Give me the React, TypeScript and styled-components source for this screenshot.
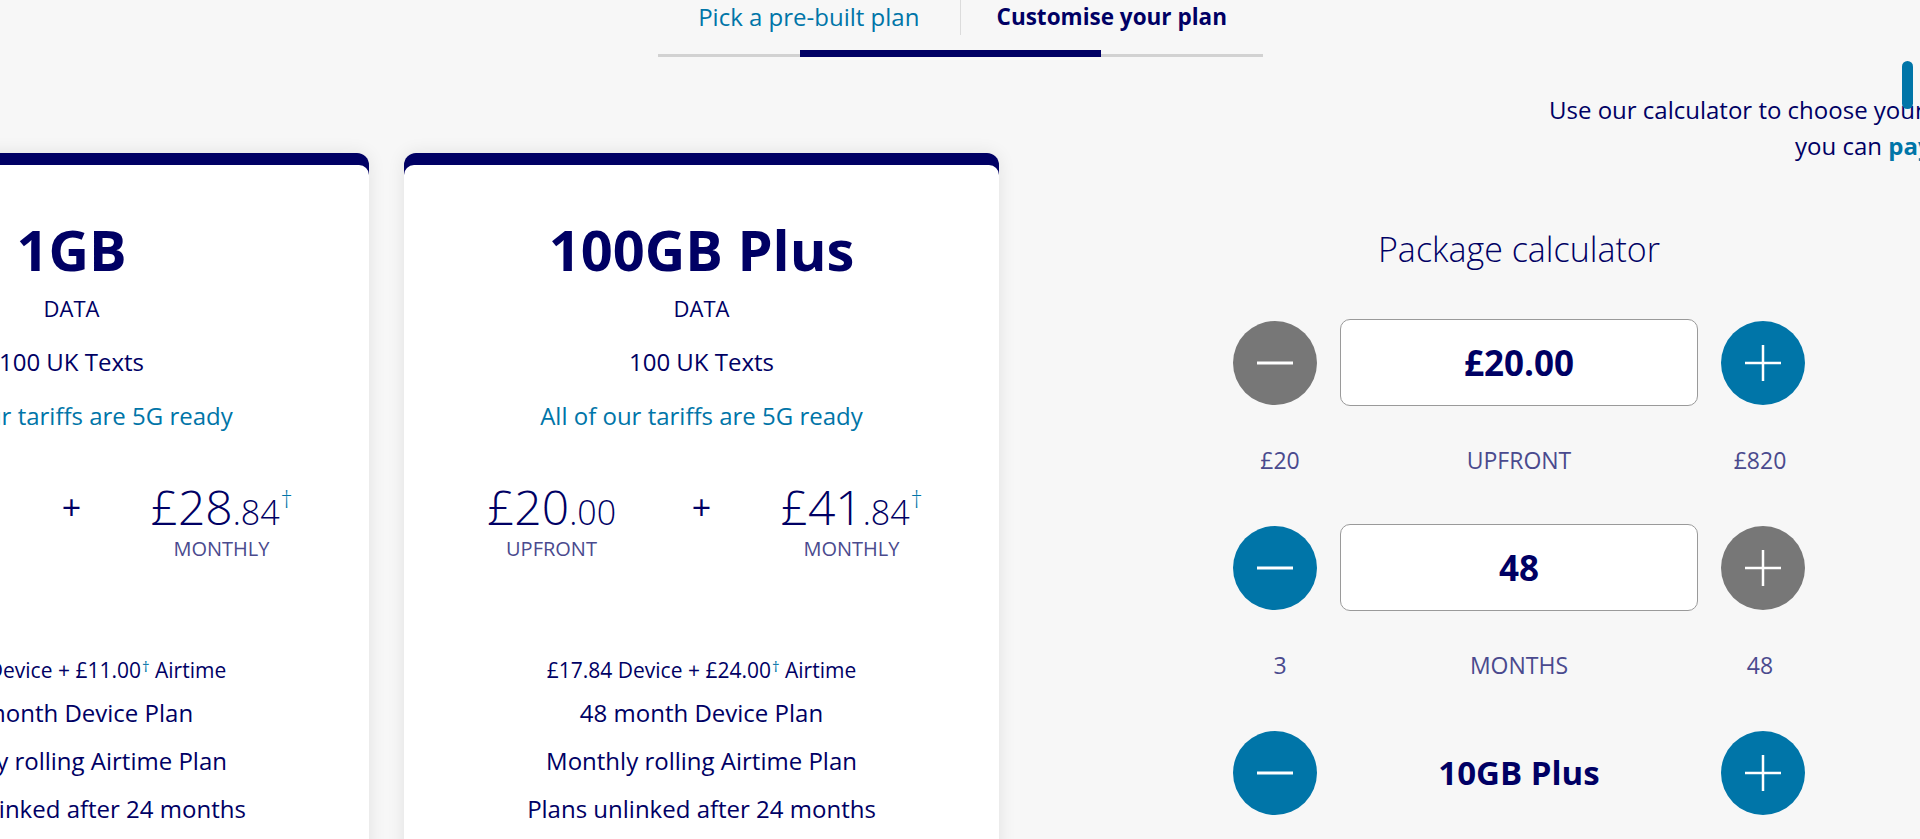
import React from "react";
import styled, { createGlobalStyle } from "styled-components";

const NAVY = "#000064";
const TEAL = "#0075a8";
const MUTED = "#4a4a8e";
const GREY_BTN = "#777777";

const GlobalStyle = createGlobalStyle`
  html, body {
    margin: 0;
    padding: 0;
    background: #f7f7f7;
    overflow: hidden;
  }
  body {
    font-family: "Open Sans", "Noto Sans", sans-serif;
    color: ${NAVY};
  }
`;

const Page = styled.div`
  width: 1920px;
  height: 839px;
  overflow: hidden;
  background: #f7f7f7;
`;

/* ---------- tabs ---------- */

const TabsWrap = styled.div`
  width: 605px;
  margin: 0 auto;
`;

const TabRow = styled.div`
  display: grid;
  grid-template-columns: 1fr 1fr;
  height: 35px;
`;

const Tab = styled.div<{ $active?: boolean; $divider?: boolean }>`
  display: flex;
  align-items: center;
  justify-content: center;
  font-size: ${(p) => (p.$active ? 22.5 : 24)}px;
  font-weight: ${(p) => (p.$active ? 700 : 400)};
  color: ${(p) => (p.$active ? NAVY : TEAL)};
  border-left: ${(p) => (p.$divider ? "1px solid #dcdcdc" : "none")};
  white-space: nowrap;
  padding-bottom: 2px;
`;

const Track = styled.div`
  position: relative;
  height: 7px;
  margin-top: 15px;

  &::before {
    content: "";
    position: absolute;
    left: 0;
    right: 0;
    bottom: 0;
    height: 3px;
    background: #d2d2d2;
  }
`;

const TrackBar = styled.div`
  position: absolute;
  top: 0;
  left: 142px;
  width: 301px;
  height: 7px;
  background: ${NAVY};
`;

/* ---------- layout ---------- */

const Content = styled.div`
  display: flex;
  align-items: flex-start;
`;

const CardsViewport = styled.div`
  width: 1040px;
  flex-shrink: 0;
  padding-top: 96px;
`;

const CardsTrack = styled.div`
  display: flex;
  gap: 35px;
  transform: translateX(-226px);
`;

const Card = styled.div`
  width: 595px;
  flex-shrink: 0;
  background: ${NAVY};
  border-radius: 12px 12px 0 0;
  padding-top: 12px;
  box-shadow: 0 0 18px rgba(0, 0, 0, 0.09);
`;

const CardBody = styled.div`
  min-height: 700px;
  background: #fff;
  border-radius: 10px 10px 0 0;
  padding-top: 49px;
  text-align: center;
`;

const PlanTitle = styled.div`
  font-size: 56px;
  line-height: 70px;
  font-weight: 700;
  color: ${NAVY};
`;

const PlanSub = styled.div`
  font-size: 22px;
  line-height: 24px;
  margin-top: 12px;
`;

const PlanLine = styled.div<{ $mt: number; $teal?: boolean }>`
  font-size: 24px;
  line-height: 28px;
  margin-top: ${(p) => p.$mt}px;
  color: ${(p) => (p.$teal ? TEAL : NAVY)};
  white-space: nowrap;
`;

const PriceRow = styled.div`
  display: grid;
  grid-template-columns: 200px 100px 200px;
  justify-content: center;
  margin-top: 52px;
`;

const PriceCol = styled.div`
  display: flex;
  flex-direction: column;
  align-items: center;
`;

const Amount = styled.div`
  font-size: 48px;
  line-height: 50px;
  font-weight: 300;
  white-space: nowrap;
`;

const Pence = styled.span`
  font-size: 34px;
`;

const Dagger = styled.span<{ $size: number }>`
  color: ${TEAL};
  font-size: ${(p) => p.$size}px;
  vertical-align: top;
  line-height: 1;
  margin-left: 1px;
  position: relative;
  top: ${(p) => (p.$size > 18 ? 5 : 1)}px;
`;

const PlusSign = styled.div`
  font-size: 34px;
  line-height: 50px;
  text-align: center;
`;

const PriceLabel = styled.div`
  font-size: 20px;
  line-height: 24px;
  color: ${MUTED};
  text-transform: uppercase;
`;

const Details = styled.div`
  margin-top: 97px;
`;

const DetailSmall = styled.div`
  font-size: 21px;
  line-height: 24px;
  white-space: nowrap;
`;

/* ---------- calculator ---------- */

const CalcColumn = styled.div`
  position: relative;
  width: 572px;
  margin-left: 193px;
  flex-shrink: 0;
`;

const ScrollPill = styled.div`
  position: absolute;
  left: 669px;
  top: 4px;
  width: 11px;
  height: 48px;
  border-radius: 6px;
  background: ${TEAL};
`;

const Intro = styled.div`
  margin-left: 316px;
  padding-top: 35px;
  white-space: nowrap;
  font-size: 24px;
  line-height: 36px;
`;

const IntroLine = styled.div<{ $indent?: number }>`
  padding-left: ${(p) => p.$indent || 0}px;
`;

const IntroLink = styled.span`
  color: ${TEAL};
  font-weight: 700;
`;

const CalcTitle = styled.div`
  margin-top: 64px;
  font-size: 34px;
  line-height: 42px;
  font-weight: 300;
  text-align: center;
`;

const StepGroup = styled.div<{ $mt: number }>`
  margin-top: ${(p) => p.$mt}px;
`;

const StepRow = styled.div`
  display: grid;
  grid-template-columns: 84px 1fr 84px;
  column-gap: 23px;
  align-items: center;
  height: 87px;
`;

const RoundButton = styled.button<{ $bg: string }>`
  width: 84px;
  height: 84px;
  border-radius: 50%;
  border: none;
  padding: 0;
  background: ${(p) => p.$bg};
  display: flex;
  align-items: center;
  justify-content: center;
  cursor: pointer;
`;

const ValueBox = styled.div<{ $plain?: boolean }>`
  height: 87px;
  box-sizing: border-box;
  display: flex;
  align-items: center;
  justify-content: center;
  background: ${(p) => (p.$plain ? "transparent" : "#fff")};
  border: ${(p) => (p.$plain ? "none" : "1px solid #9a9a9a")};
  border-radius: 10px;
  font-size: ${(p) => (p.$plain ? 33 : 35)}px;
  font-weight: 700;
  color: ${NAVY};
`;

const LabelRow = styled.div`
  display: grid;
  grid-template-columns: 84px 1fr 84px;
  column-gap: 23px;
  margin-top: 42px;
  font-size: 23px;
  line-height: 24px;
  color: ${MUTED};
  text-align: center;
`;

const RangeLabel = styled.span<{ $side: "min" | "max" }>`
  white-space: nowrap;
  padding-left: ${(p) => (p.$side === "min" ? 10 : 0)}px;
  padding-right: ${(p) => (p.$side === "max" ? 6 : 0)}px;
`;

const MinusIcon = () => (
  <svg width="36" height="36" viewBox="0 0 36 36">
    <line x1="0" y1="18" x2="36" y2="18" stroke="#fff" strokeWidth="3" />
  </svg>
);

const PlusIcon = () => (
  <svg width="36" height="36" viewBox="0 0 36 36">
    <line x1="0" y1="18" x2="36" y2="18" stroke="#fff" strokeWidth="2.5" />
    <line x1="18" y1="0" x2="18" y2="36" stroke="#fff" strokeWidth="2.5" />
  </svg>
);

type Plan = {
  name: string;
  upfront: [string, string];
  monthly: [string, string];
  device: string;
  airtime: string;
};

const plans: Plan[] = [
  { name: "1GB", upfront: ["£20", ".00"], monthly: ["£28", ".84"], device: "£17.84", airtime: "£11.00" },
  { name: "100GB Plus", upfront: ["£20", ".00"], monthly: ["£41", ".84"], device: "£17.84", airtime: "£24.00" },
];

const PlanCard = ({ plan }: { plan: Plan }) => (
  <Card>
    <CardBody>
      <PlanTitle>{plan.name}</PlanTitle>
      <PlanSub>DATA</PlanSub>
      <PlanLine $mt={28}>100 UK Texts</PlanLine>
      <PlanLine $mt={26} $teal>All of our tariffs are 5G ready</PlanLine>
      <PriceRow>
        <PriceCol>
          <Amount>
            {plan.upfront[0]}
            <Pence>{plan.upfront[1]}</Pence>
          </Amount>
          <PriceLabel>Upfront</PriceLabel>
        </PriceCol>
        <PlusSign>+</PlusSign>
        <PriceCol>
          <Amount>
            {plan.monthly[0]}
            <Pence>{plan.monthly[1]}</Pence>
            <Dagger $size={24}>†</Dagger>
          </Amount>
          <PriceLabel>Monthly</PriceLabel>
        </PriceCol>
      </PriceRow>
      <Details>
        <DetailSmall>
          {plan.device} Device + {plan.airtime}
          <Dagger $size={15}>†</Dagger> Airtime
        </DetailSmall>
        <PlanLine $mt={17}>48 month Device Plan</PlanLine>
        <PlanLine $mt={20}>Monthly rolling Airtime Plan</PlanLine>
        <PlanLine $mt={20}>Plans unlinked after 24 months</PlanLine>
      </Details>
    </CardBody>
  </Card>
);

export default function App() {
  return (
    <Page>
      <GlobalStyle />
      <TabsWrap>
        <TabRow>
          <Tab>Pick a pre-built plan</Tab>
          <Tab $active $divider>
            Customise your plan
          </Tab>
        </TabRow>
        <Track>
          <TrackBar />
        </Track>
      </TabsWrap>

      <Content>
        <CardsViewport>
          <CardsTrack>
            {plans.map((p) => (
              <PlanCard key={p.name} plan={p} />
            ))}
          </CardsTrack>
        </CardsViewport>

        <CalcColumn>
          <ScrollPill />
          <Intro>
            <IntroLine>Use our calculator to choose your upfront cost, contract length and data</IntroLine>
            <IntroLine $indent={246}>
              you can <IntroLink>pay monthly</IntroLink>
            </IntroLine>
          </Intro>
          <CalcTitle>Package calculator</CalcTitle>

          <StepGroup $mt={49}>
            <StepRow>
              <RoundButton $bg={GREY_BTN} aria-label="decrease upfront">
                <MinusIcon />
              </RoundButton>
              <ValueBox>£20.00</ValueBox>
              <RoundButton $bg={TEAL} aria-label="increase upfront">
                <PlusIcon />
              </RoundButton>
            </StepRow>
            <LabelRow>
              <RangeLabel $side="min">£20</RangeLabel>
              <span>UPFRONT</span>
              <RangeLabel $side="max">£820</RangeLabel>
            </LabelRow>
          </StepGroup>

          <StepGroup $mt={52}>
            <StepRow>
              <RoundButton $bg={TEAL} aria-label="decrease months">
                <MinusIcon />
              </RoundButton>
              <ValueBox>48</ValueBox>
              <RoundButton $bg={GREY_BTN} aria-label="increase months">
                <PlusIcon />
              </RoundButton>
            </StepRow>
            <LabelRow>
              <RangeLabel $side="min">3</RangeLabel>
              <span>MONTHS</span>
              <RangeLabel $side="max">48</RangeLabel>
            </LabelRow>
          </StepGroup>

          <StepGroup $mt={52}>
            <StepRow>
              <RoundButton $bg={TEAL} aria-label="decrease data">
                <MinusIcon />
              </RoundButton>
              <ValueBox $plain>10GB Plus</ValueBox>
              <RoundButton $bg={TEAL} aria-label="increase data">
                <PlusIcon />
              </RoundButton>
            </StepRow>
          </StepGroup>
        </CalcColumn>
      </Content>
    </Page>
  );
}
